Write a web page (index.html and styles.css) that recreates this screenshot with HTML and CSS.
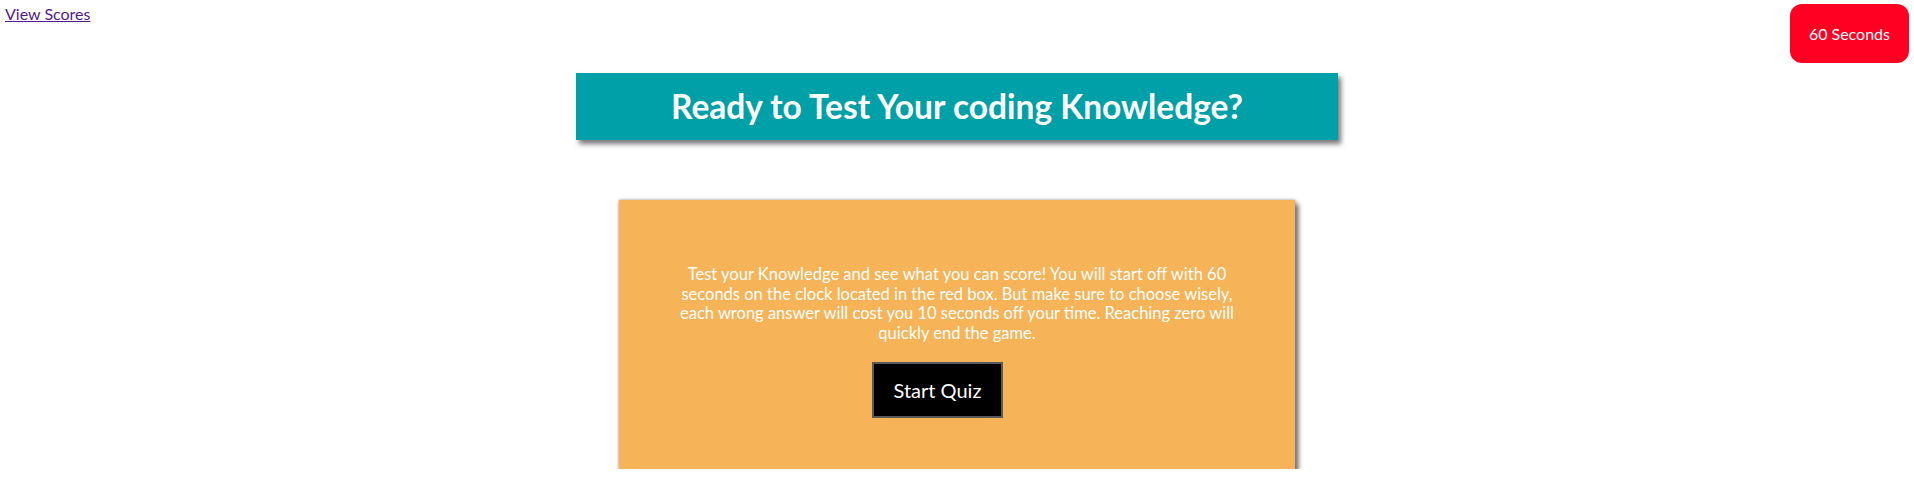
FILE: index.html
```html
<!DOCTYPE html>
<html lang="en">
<head>
<meta charset="utf-8">
<title>Coding Quiz</title>
<link rel="stylesheet" href="styles.css">
</head>
<body>
<header class="top-bar">
  <a class="scores-link" href="#scores">View Scores</a>
  <div class="timer">60 Seconds</div>
</header>
<main class="main">
  <h1 class="banner">Ready to Test Your coding Knowledge?</h1>
  <section class="card">
    <p class="intro">Test your Knowledge and see what you can score! You will start off with 60 seconds on the clock located in the red box. But make sure to choose wisely, each wrong answer will cost you 10 seconds off your time. Reaching zero will quickly end the game.</p>
    <button class="start-btn" type="button">Start Quiz</button>
  </section>
</main>
</body>
</html>
```

FILE: styles.css
```css
html, body {
  margin: 0;
  padding: 0;
  background: #ffffff;
}

body {
  font-family: "Lato", "Open Sans", sans-serif;
  font-size: 16px;
  color: #000;
}

.top-bar {
  display: flex;
  justify-content: space-between;
  align-items: flex-start;
  padding: 4px 5px 0 5px;
}

.scores-link {
  color: #551a8b;
  text-decoration: underline;
  font-size: 16px;
  line-height: 19px;
}

.timer {
  background: #ff0022;
  color: #ffffff;
  border-radius: 12px;
  padding: 20px 19px;
  line-height: 19px;
  font-size: 16px;
}

.main {
  display: flex;
  flex-direction: column;
  align-items: center;
}

.banner {
  margin: 10px 0 0 0;
  width: 762px;
  height: 67px;
  box-sizing: border-box;
  background: #00a0a8;
  color: #ffffff;
  font-size: 33.5px;
  font-weight: 700;
  line-height: 67px;
  text-align: center;
  box-shadow: 3px 4px 5px #777;
}

.card {
  margin-top: 60px;
  width: 676px;
  height: 269px;
  box-sizing: border-box;
  background: #f7b357;
  box-shadow: 0 0 3px #999, 3px 4px 5px #555;
  padding: 65px 50px 0 50px;
  display: flex;
  flex-direction: column;
  align-items: center;
}

.intro {
  margin: 0;
  color: #ffffff;
  text-align: center;
  font-size: 16.5px;
  line-height: 19.5px;
}

.start-btn {
  margin: 19px 39px 0 0;
  background: #000000;
  color: #ffffff;
  border: 2px solid #5a5a5a;
  font-family: "Lato", "Open Sans", sans-serif;
  font-size: 20px;
  line-height: 24px;
  padding: 0;
  width: 131px;
  height: 56px;
  white-space: nowrap;
  text-align: center;
  box-sizing: border-box;
}
```
